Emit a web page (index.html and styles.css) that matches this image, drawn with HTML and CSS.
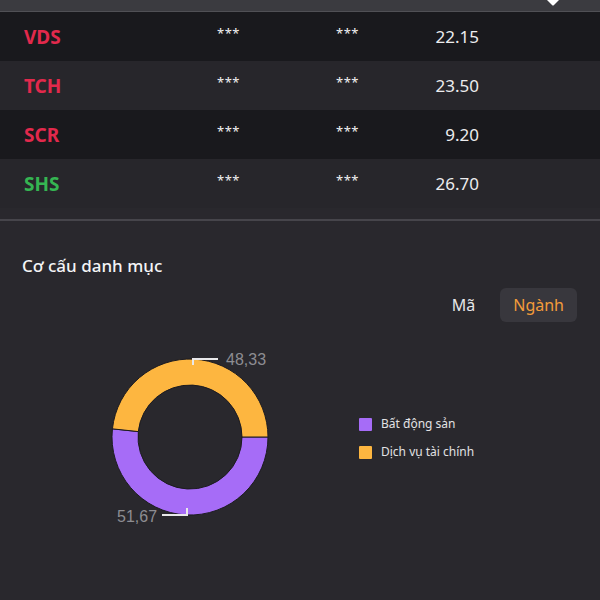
FILE: index.html
```html
<!DOCTYPE html>
<html lang="vi">
<head>
    <meta charset="UTF-8">
    <meta name="viewport" content="width=device-width, initial-scale=1.0">
    <title>Danh mục</title>
    <link rel="stylesheet" href="styles.css">
</head>
<body>
    <div class="topbar">
        <svg class="caret" width="14" height="7" viewBox="0 0 14 7">
            <path d="M1 0 L13 0 L8 5 Q7 6 6 5 Z" fill="#ffffff"/>
        </svg>
    </div>

    <div class="stock-table">
        <div class="row dark">
            <span class="symbol down">VDS</span>
            <span class="masked">***</span>
            <span class="masked">***</span>
            <span class="price">22.15</span>
        </div>
        <div class="row light">
            <span class="symbol down">TCH</span>
            <span class="masked">***</span>
            <span class="masked">***</span>
            <span class="price">23.50</span>
        </div>
        <div class="row dark">
            <span class="symbol down">SCR</span>
            <span class="masked">***</span>
            <span class="masked">***</span>
            <span class="price">9.20</span>
        </div>
        <div class="row light">
            <span class="symbol up">SHS</span>
            <span class="masked">***</span>
            <span class="masked">***</span>
            <span class="price">26.70</span>
        </div>
    </div>

    <div class="portfolio">
        <h2 class="section-title">Cơ cấu danh mục</h2>

        <div class="toggle">
            <span class="toggle-item">Mã</span>
            <span class="toggle-item active">Ngành</span>
        </div>

        <div class="chart-row">
            <svg class="donut" width="210" height="190" viewBox="0 0 210 190">
                <path d="M178 96 A78 78 0 1 1 22.43 87.85 L48.29 90.57 A52 52 0 1 0 152 96 Z" fill="#a66cf7" stroke="#1c1b20" stroke-width="1"/>
                <path d="M22.43 87.85 A78 78 0 0 1 178 96 L152 96 A52 52 0 0 0 48.29 90.57 Z" fill="#fdb640" stroke="#1c1b20" stroke-width="1"/>
                <polyline points="103,24 103,18 128,18" fill="none" stroke="#e8e8ea" stroke-width="2"/>
                <text x="136" y="24" class="slice-label">48,33</text>
                <polyline points="72,174 97,174 97,167" fill="none" stroke="#e8e8ea" stroke-width="2"/>
                <text x="27" y="181" class="slice-label">51,67</text>
            </svg>

            <ul class="legend">
                <li><span class="swatch purple"></span>Bất động sản</li>
                <li><span class="swatch yellow"></span>Dịch vụ tài chính</li>
            </ul>
        </div>
    </div>
</body>
</html>
```

FILE: styles.css
```css
body {
    margin: 0;
    background-color: #29282d;
    font-family: "Noto Sans", "Open Sans", sans-serif;
    color: #ececee;
    height: 600px;
    overflow: hidden;
}

.topbar {
    height: 11px;
    background-color: #3b3b40;
    border-bottom: 1px solid #505055;
    display: flex;
    justify-content: flex-end;
    align-items: flex-start;
    padding-right: 40px;
}

.caret {
    display: block;
}

.row {
    height: 49px;
    display: grid;
    grid-template-columns: 193px 119px 60px 83px;
    align-items: center;
    padding-left: 24px;
}

.row.dark {
    background-color: #19191d;
}

.row.light {
    background-color: #27262b;
}

.symbol {
    font-size: 19px;
    font-weight: bold;
}

.symbol.down {
    color: #e2294c;
}

.symbol.up {
    color: #35b552;
}

.masked {
    font-size: 13px;
    color: #f2f2f2;
    margin-top: -8px;
    letter-spacing: 0.5px;
}

.price {
    font-size: 17px;
    text-align: right;
    color: #ececee;
}

.portfolio {
    margin-top: 11px;
    border-top: 2px solid #46454b;
    padding-top: 34px;
}

.section-title {
    margin: 0 0 0 22px;
    font-size: 17px;
    font-weight: 500;
    line-height: 22px;
    color: #f4f4f6;
}

.toggle {
    display: flex;
    justify-content: flex-end;
    align-items: center;
    gap: 12px;
    margin-top: 11px;
    padding-right: 23px;
}

.toggle-item {
    font-size: 16px;
    color: #e6e6e8;
    padding: 6px 13px;
    border-radius: 6px;
    line-height: 22px;
}

.toggle-item.active {
    background-color: #38373d;
    color: #f39c3a;
}

.chart-row {
    display: flex;
    align-items: center;
    margin-top: 19px;
    padding-left: 90px;
}

.donut {
    display: block;
}

.slice-label {
    font-family: "Liberation Sans", Arial, sans-serif;
    font-size: 16px;
    fill: #8d8d92;
}

.legend {
    list-style: none;
    margin: 4px 0 0 59px;
    padding: 0;
    display: flex;
    flex-direction: column;
    gap: 10px;
}

.legend li {
    display: flex;
    align-items: center;
    gap: 9px;
    font-size: 12px;
    line-height: 18px;
    color: #e2e2e4;
}

.swatch {
    width: 13px;
    height: 13px;
    border-radius: 1px;
}

.swatch.purple {
    background-color: #a66cf7;
}

.swatch.yellow {
    background-color: #fdb640;
}
```
